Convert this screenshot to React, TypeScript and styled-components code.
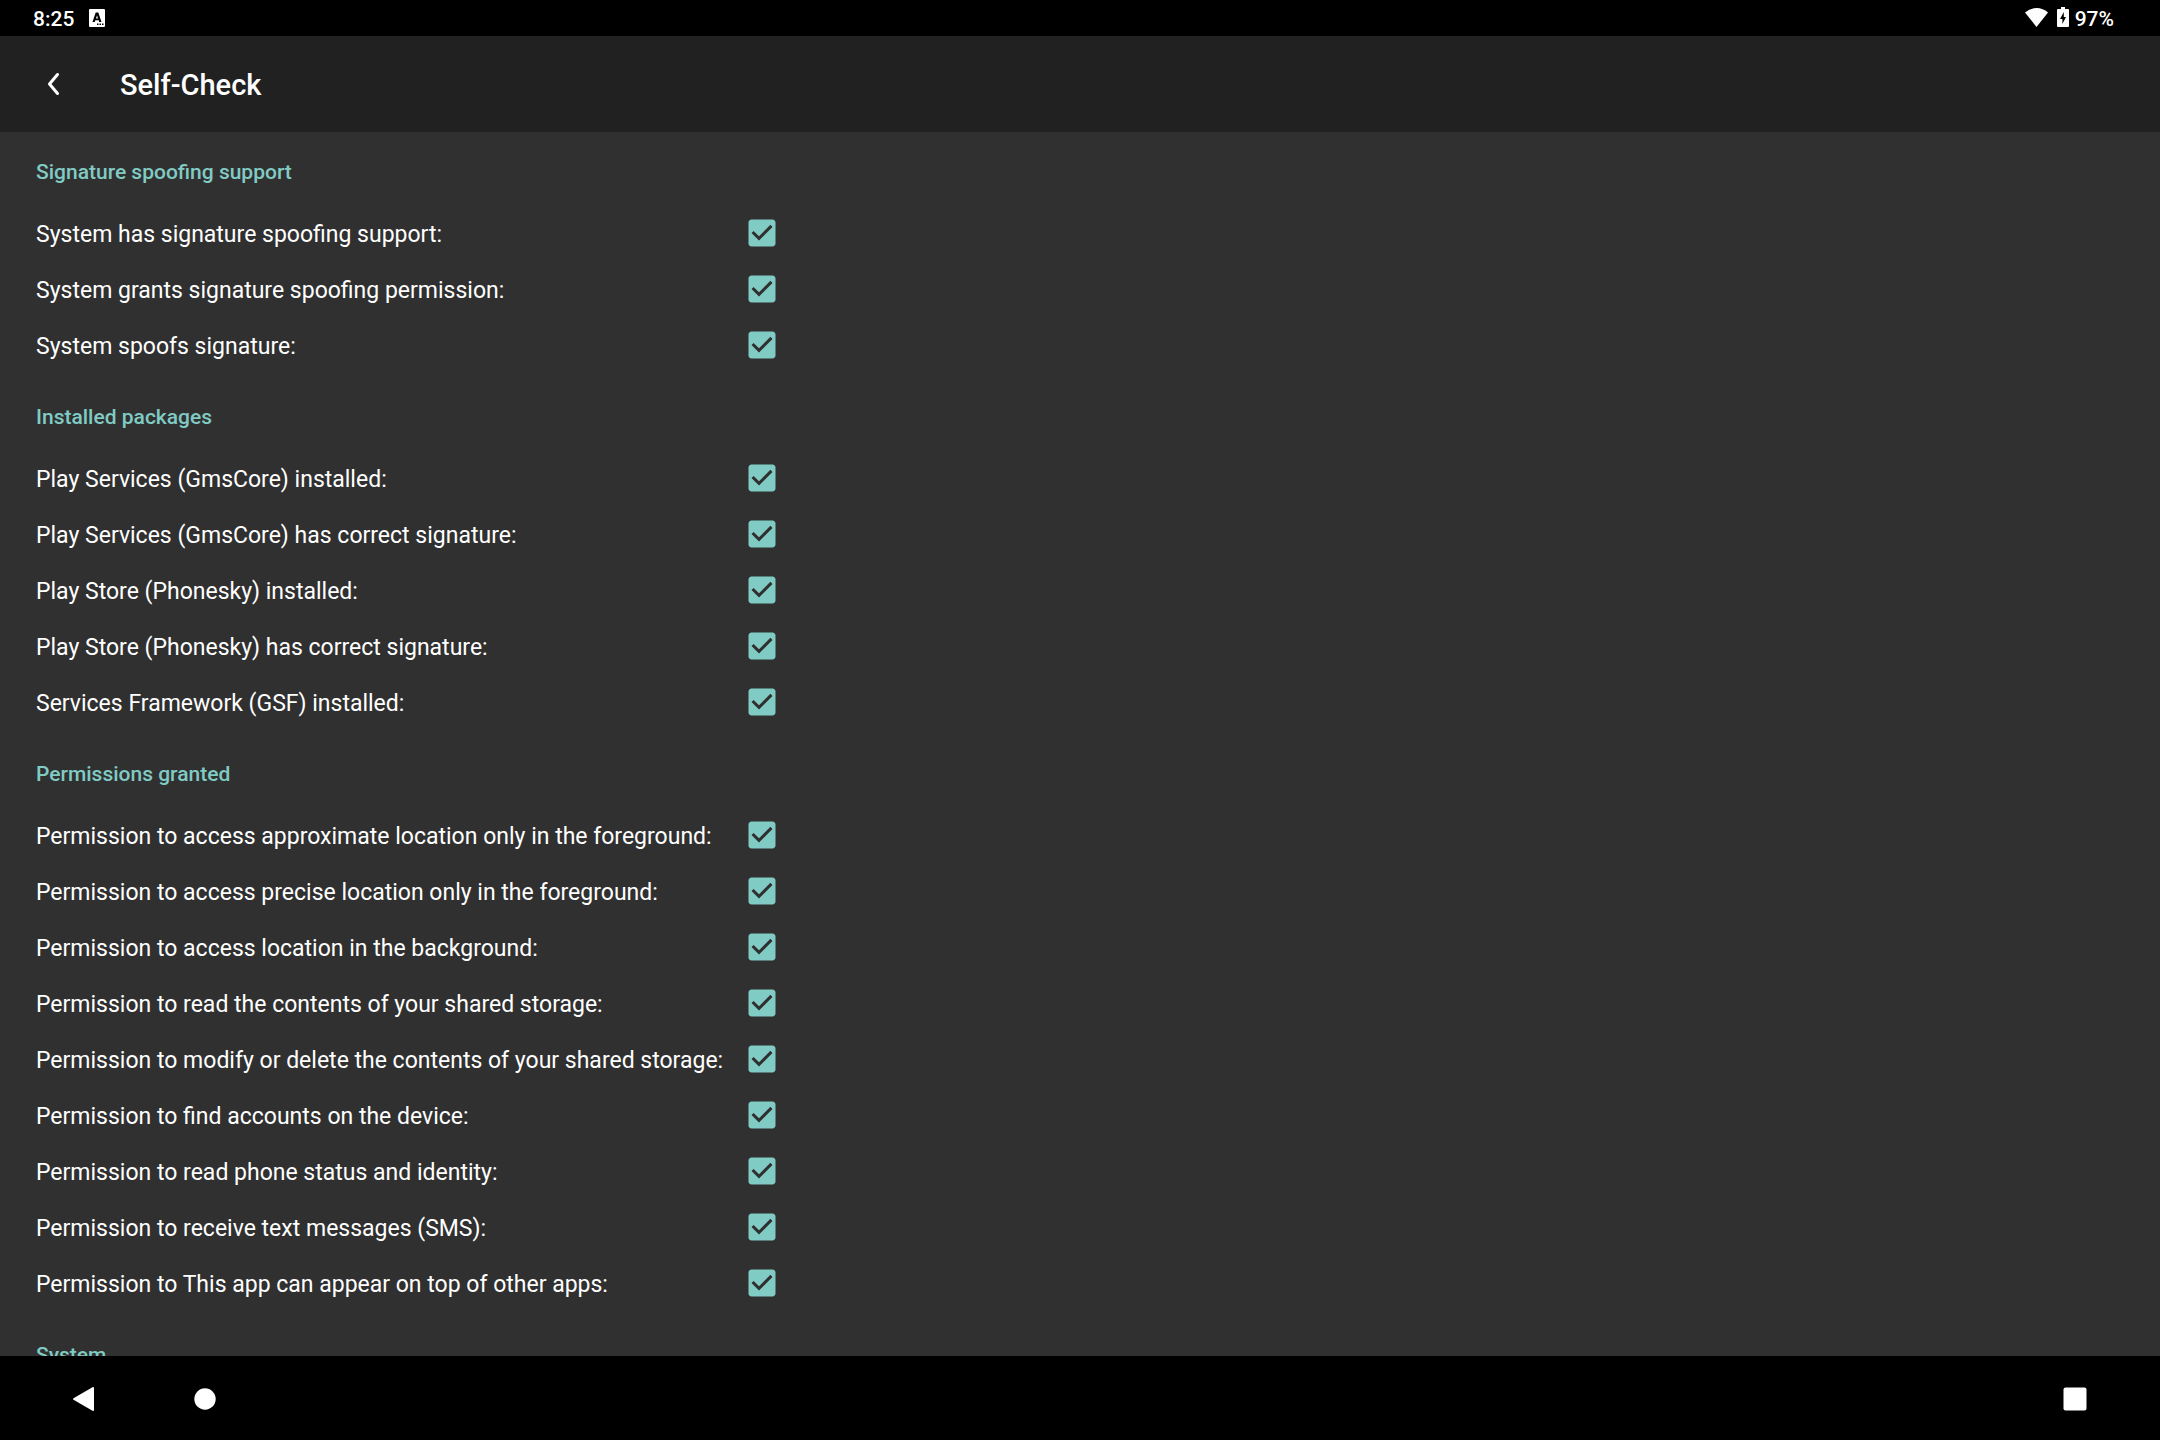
import React from "react";
import styled, { createGlobalStyle } from "styled-components";

const GlobalStyle = createGlobalStyle`
  *, *::before, *::after { box-sizing: border-box; }
  body { margin: 0; background: #303030; }
  button, input { margin: 0; padding: 0; border: 0; background: none; color: inherit; font: inherit; }
`;

const Screen = styled.div`
  display: flex;
  flex-direction: column;
  height: 100vh;
  overflow: hidden;
  background: #303030;
  color: #fff;
  font-family: Roboto, "Noto Sans", sans-serif;
`;

const StatusBar = styled.div`
  display: flex;
  flex: none;
  align-items: center;
  justify-content: space-between;
  height: 36px;
  padding: 0 46px 2px 33px;
  background: #000;
`;

const StatusText = styled.span`
  padding-top: 4px;
  font-size: 21px;
  font-weight: 500;
  line-height: 24px;
`;

const StatusGroup = styled.div<{ $gap: number }>`
  display: flex;
  align-items: center;
  gap: ${(p) => p.$gap}px;
`;

const StatusIcon = styled.svg`
  display: block;
  flex: none;
  height: 20px;
  fill: #fff;
`;

const AppBar = styled.header`
  display: flex;
  flex: none;
  align-items: center;
  gap: 13px;
  height: 96px;
  background: #212121;
`;

const BackButton = styled.button`
  display: grid;
  place-items: center;
  width: 107px;
  height: 96px;
`;

const Title = styled.h1`
  margin: 0;
  padding-top: 2px;
  font-size: 29px;
  font-weight: 500;
  line-height: 36px;
`;

const Content = styled.main`
  flex: 1;
  min-height: 0;
  overflow: hidden;
  padding: 26px 36px 0;
`;

const Groups = styled.div`
  display: flex;
  flex-direction: column;
  gap: 30px;
  width: max-content;
`;

const GroupTitle = styled.h2`
  margin: 0 0 19px;
  color: #80cbc4;
  font-size: 21px;
  font-weight: 500;
  line-height: 28px;
`;

const Row = styled.label`
  display: flex;
  align-items: center;
  justify-content: space-between;
  gap: 21px;
  height: 56px;
`;

const RowText = styled.span`
  padding-top: 4px;
  font-size: 23px;
  line-height: 28px;
`;

const CheckBox = styled.span`
  display: grid;
  flex: none;
  width: 36px;
  height: 36px;

  > * { grid-area: 1 / 1; width: 36px; height: 36px; }
  input { appearance: none; }
  svg { pointer-events: none; fill: none; }
  input:checked + svg { fill: #80cbc4; }
`;

const NavBar = styled.nav`
  display: flex;
  flex: none;
  height: 84px;
  padding: 0 25px;
  background: #000;
`;

const NavButton = styled.button<{ $end?: boolean }>`
  display: grid;
  place-items: center;
  width: 120px;
  margin-left: ${(p) => (p.$end ? "auto" : "0")};
  padding-top: 2px;

  svg { display: block; fill: #fff; }
`;

const groups = [
  {
    title: "Signature spoofing support",
    checks: [
      "System has signature spoofing support:",
      "System grants signature spoofing permission:",
      "System spoofs signature:",
    ],
  },
  {
    title: "Installed packages",
    checks: [
      "Play Services (GmsCore) installed:",
      "Play Services (GmsCore) has correct signature:",
      "Play Store (Phonesky) installed:",
      "Play Store (Phonesky) has correct signature:",
      "Services Framework (GSF) installed:",
    ],
  },
  {
    title: "Permissions granted",
    checks: [
      "Permission to access approximate location only in the foreground:",
      "Permission to access precise location only in the foreground:",
      "Permission to access location in the background:",
      "Permission to read the contents of your shared storage:",
      "Permission to modify or delete the contents of your shared storage:",
      "Permission to find accounts on the device:",
      "Permission to read phone status and identity:",
      "Permission to receive text messages (SMS):",
      "Permission to This app can appear on top of other apps:",
    ],
  },
  { title: "System", checks: [] },
];

function Check({ text }: { text: string }) {
  return (
    <Row>
      <RowText>{text}</RowText>
      <CheckBox>
        <input type="checkbox" defaultChecked />
        <svg viewBox="0 0 24 24" aria-hidden="true">
          <path d="M19 3H5c-1.11 0-2 .9-2 2v14c0 1.1.89 2 2 2h14c1.11 0 2-.9 2-2V5c0-1.1-.89-2-2-2zm-9 14l-5-5 1.41-1.41L10 14.17l7.59-7.59L19 8l-9 9z" />
        </svg>
      </CheckBox>
    </Row>
  );
}

export default function App() {
  return (
    <Screen>
      <GlobalStyle />
      <StatusBar>
        <StatusGroup $gap={15}>
          <StatusText>8:25</StatusText>
          <StatusIcon width="16" viewBox="0 0 16 20" aria-hidden="true">
            <path
              fillRule="evenodd"
              d="M1 2h14q1 0 1 1v16q0 1-1 1H1q-1 0-1-1V3q0-1 1-1zM6.700 5.500L3.500 15h2.300l.5-1.800h3.400l.5 1.800h2.300L9.300 5.500zm1.300 2.700l1 3.200H7zM8 16.500v1.500h1.500v-1.500zm2.500 0v1.500H12v-1.500zm2.500 0v1.500h1.500v-1.500z"
            />
          </StatusIcon>
        </StatusGroup>
        <StatusGroup $gap={6}>
          <StatusGroup $gap={9}>
            <StatusIcon width="23" viewBox="0 0 23 20" aria-hidden="true">
              <path d="M11.500 20L0 5.500Q5 1 11.500 1T23 5.500z" />
            </StatusIcon>
            <StatusIcon width="12" viewBox="0 0 12 20" aria-hidden="true">
              <path
                fillRule="evenodd"
                d="M4 0h4v2h3q1 0 1 1v16q0 1-1 1H1q-1 0-1-1V3q0-1 1-1h3zM6.800 5L3 12h2.400v5L9 10H6.800z"
              />
            </StatusIcon>
          </StatusGroup>
          <StatusText>97%</StatusText>
        </StatusGroup>
      </StatusBar>
      <AppBar>
        <BackButton type="button" aria-label="Back">
          <svg width="13" height="24" viewBox="0 0 13 24" aria-hidden="true">
            <path d="M10.500 2.500L2.500 12l8 9.500" fill="none" stroke="#fff" strokeWidth="3" strokeLinecap="round" strokeLinejoin="round" />
          </svg>
        </BackButton>
        <Title>Self-Check</Title>
      </AppBar>
      <Content>
        <Groups>
          {groups.map((group) => (
            <section key={group.title}>
              <GroupTitle>{group.title}</GroupTitle>
              {group.checks.map((text) => (
                <Check key={text} text={text} />
              ))}
            </section>
          ))}
        </Groups>
      </Content>
      <NavBar>
        <NavButton type="button" aria-label="Back">
          <svg width="24" height="24" viewBox="0 0 24 24">
            <path d="M.5 11.200L19.500 .2Q21 -.2 21 1v22q0 1.200-1.500 .8L.5 12.800Q-.5 12 .5 11.200z" />
          </svg>
        </NavButton>
        <NavButton type="button" aria-label="Home">
          <svg width="22" height="22" viewBox="0 0 22 22">
            <circle cx="11" cy="11" r="10.700" />
          </svg>
        </NavButton>
        <NavButton type="button" aria-label="Recent apps" $end>
          <svg width="24" height="24" viewBox="0 0 24 24">
            <rect x="0.500" y="0.500" width="23" height="23" rx="2" />
          </svg>
        </NavButton>
      </NavBar>
    </Screen>
  );
}
